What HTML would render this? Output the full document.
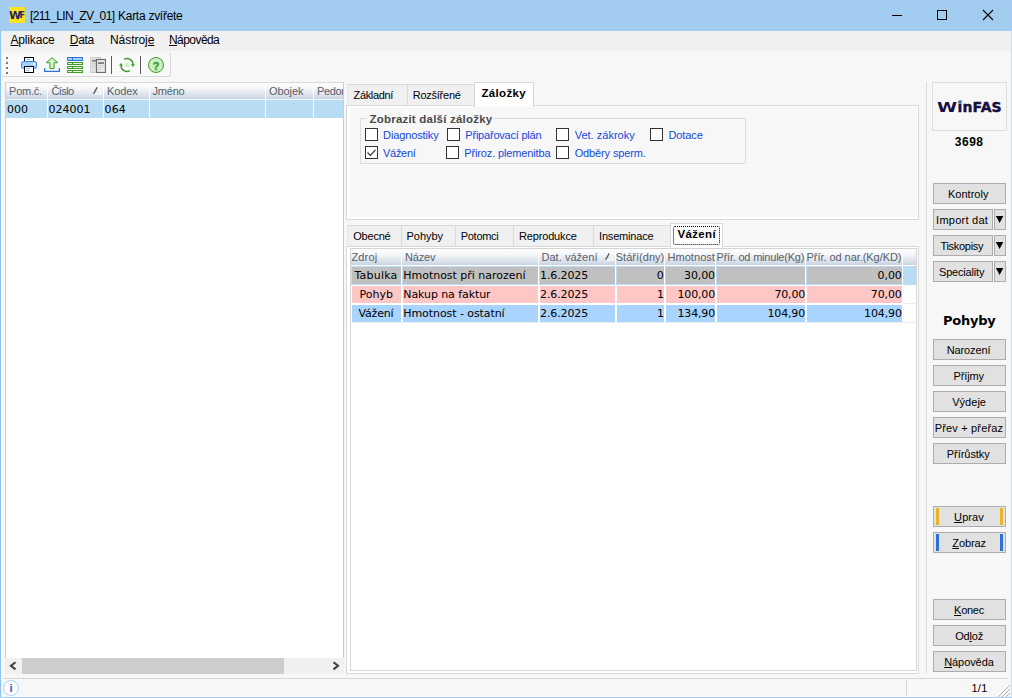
<!DOCTYPE html>
<html lang="cs">
<head>
<meta charset="utf-8">
<title>[211_LIN_ZV_01] Karta zvířete</title>
<style>
*{box-sizing:border-box;margin:0;padding:0}
html,body{width:1012px;height:698px;overflow:hidden;background:#f7f7f7}
body{position:relative;font-family:"Liberation Sans","DejaVu Sans",sans-serif;font-size:11px;color:#000}
.a,.t,.btn,.cb,.tab{position:absolute}
.t{white-space:nowrap;display:block;z-index:5}
u{text-decoration:underline;text-underline-offset:1px}
#title{left:0;top:0;width:1012px;height:31px;background:#a2cdf0}
#menu{left:1px;top:31px;width:1010px;height:20px;background:#f0f0f0}
.hdr{background:linear-gradient(#fdfdfe 0%,#f7f8fa 30%,#e8ecf1 55%,#d7dfe8 80%,#c9d3df 100%)}
.btn{background:#e1e1e1;border:1px solid #adadad;height:21px}
.cb{width:13px;height:13px;border:1px solid #333;background:#fff}
.tab{background:#f0f0f0;border:1px solid #d9d9d9;border-bottom:none}
.tab.sel{background:#f7f7f7;z-index:3}
.w{display:inline-block;font-weight:inherit;transform:scaleX(1.3);transform-origin:0 50%;margin-right:4.6px;-webkit-text-stroke:0}
.vs{position:absolute;width:1px;background:#fff}
</style>
</head>
<body>
<!-- window frame -->
<div class="a" id="title"></div>
<div class="a" style="left:0;top:31px;width:1px;height:667px;background:#8fc4ee"></div>
<div class="a" style="left:1011px;top:31px;width:1px;height:667px;background:#c2def5"></div>
<div class="a" style="left:0;top:697px;width:1012px;height:1px;background:#a3cdf0"></div>
<!-- app icon -->
<div class="a" style="left:9px;top:7px;width:16px;height:16px;background:#ffe21f"></div>
<!-- window buttons -->
<svg class="a" style="left:880px;top:0" width="132" height="31" viewBox="0 0 132 31">
  <path d="M12 15.5h10" stroke="#000" stroke-width="1" fill="none"/>
  <rect x="57.5" y="10.5" width="9" height="9" stroke="#000" stroke-width="1" fill="none"/>
  <path d="M103 10l10 10M113 10l-10 10" stroke="#000" stroke-width="1.1" fill="none"/>
</svg>
<div class="a" id="menu"></div>
<!-- toolbar -->
<div class="a" style="left:1px;top:52px;width:170px;height:25px;background:#f9f9f9;border:1px solid #d8d8d8;border-top-color:#efefef;border-left-color:#efefef;border-radius:3px"></div>
<!-- toolbar grip -->
<div class="a" style="left:6px;top:57px;width:2px;height:2px;background:#7a7a7a;box-shadow:0 5px 0 #7a7a7a,0 10px 0 #7a7a7a,0 15px 0 #7a7a7a"></div>
<!-- printer -->
<svg class="a" style="left:21px;top:57px" width="16" height="16" viewBox="0 0 16 16">
  <rect x="3.5" y="0.5" width="9" height="5" fill="#fff" stroke="#000"/>
  <path d="M5.2 2.5h3.8" stroke="#7cc0fb" stroke-width="1"/>
  <rect x="0.5" y="4.5" width="15" height="7" rx="2" fill="#a3d0fd" stroke="#3b82e0"/>
  <rect x="12.2" y="6" width="1.8" height="2" fill="#fff"/>
  <rect x="3.5" y="9.5" width="9" height="6" fill="#fff" stroke="#000"/>
  <path d="M5.2 11.5h3.8M5.2 13.5h2.8" stroke="#7cc0fb" stroke-width="1"/>
</svg>
<!-- upload -->
<svg class="a" style="left:44px;top:57px" width="16" height="16" viewBox="0 0 16 16">
  <path d="M8 0.6L13.7 5.7H10.1V11.6H5.9V5.7H2.3Z" fill="#d2f5c4" stroke="#45992e" stroke-width="1" stroke-linejoin="round"/>
  <path d="M0.6 11v3.4h14.8V11" fill="none" stroke="#2f74d8" stroke-width="1.3"/>
</svg>
<!-- table -->
<svg class="a" style="left:67px;top:57px" width="16" height="16" viewBox="0 0 16 16">
  <rect x="0" y="0" width="16" height="4" rx="0.5" fill="#2f74d8"/>
  <rect x="1" y="1" width="4" height="2" fill="#a3d0fd"/><rect x="6" y="1" width="9" height="2" fill="#a3d0fd"/>
  <rect x="0" y="5" width="16" height="3" rx="0.5" fill="#45992e"/>
  <rect x="0" y="9" width="16" height="3" rx="0.5" fill="#45992e"/>
  <rect x="0" y="13" width="16" height="3" rx="0.5" fill="#45992e"/>
  <path d="M1 6.5h4M6 6.5h9M1 10.5h4M6 10.5h9M1 14.5h4M6 14.5h9" stroke="#e4f8dc" stroke-width="1"/>
</svg>
<!-- copy (disabled) -->
<svg class="a" style="left:90px;top:57px" width="16" height="16" viewBox="0 0 16 16">
  <rect x="0.5" y="0.5" width="10" height="15" fill="#e2e2e2" stroke="#cfcfcf"/>
  <rect x="2" y="3" width="5" height="1.6" fill="#7a7a7a"/>
  <path d="M2 6.5h4M2 8.5h4M2 10.5h3" stroke="#cfcfcf" stroke-width="1"/>
  <rect x="6.5" y="2.5" width="9" height="13" fill="#e9e9e9" stroke="#6e6e6e" stroke-width="1.2"/>
  <rect x="8" y="5.2" width="6" height="1.7" fill="#757575"/>
  <path d="M8 8.5h6M8 10.5h5M8 12.5h3" stroke="#d0d0d0" stroke-width="1"/>
</svg>
<div class="a" style="left:111px;top:56px;width:1px;height:18px;background:#5a5a5a"></div>
<!-- refresh -->
<svg class="a" style="left:119px;top:57px" width="16" height="16" viewBox="0 0 16 16">
  <rect x="6.2" y="6.2" width="3.8" height="3.8" fill="#c8f0c0"/>
  <path d="M5.2 2.3A6 6 0 0 1 14 7.6" fill="none" stroke="#45992e" stroke-width="1.4"/>
  <path d="M11.8 7.2h4.2l-2.1 2.8z" fill="#45992e"/>
  <path d="M10.8 13.7A6 6 0 0 1 2 8.4" fill="none" stroke="#45992e" stroke-width="1.4"/>
  <path d="M4.2 8.8H0l2.1-2.8z" fill="#45992e"/>
</svg>
<div class="a" style="left:140px;top:56px;width:1px;height:18px;background:#5a5a5a"></div>
<!-- help -->
<div class="a" style="left:148px;top:57px;width:16px;height:16px;border-radius:8px;background:#c9f0c2;border:1px solid #45992e"></div>

<!-- left grid -->
<div class="a" style="left:5px;top:82px;width:339px;height:576px;background:#fff;border:1px solid #cdcdcd;border-top-color:#d9d9d9;border-bottom:none"></div>
<div class="a hdr" style="left:6px;top:83px;width:337px;height:16px"></div>
<div class="a" style="left:6px;top:99px;width:337px;height:1px;background:#f1f3f6"></div>
<div class="a" style="left:6px;top:100px;width:337px;height:18px;background:#b9dcf5"></div>
<div class="vs" style="left:47px;top:83px;height:35px"></div>
<div class="vs" style="left:103px;top:83px;height:35px"></div>
<div class="vs" style="left:149px;top:83px;height:35px"></div>
<div class="vs" style="left:265px;top:83px;height:35px"></div>
<div class="vs" style="left:313px;top:83px;height:35px"></div>
<svg class="a" style="left:93px;top:87px" width="9" height="8" viewBox="0 0 9 8"><path d="M4.2 0.6L8.2 6.9H0.6" stroke="#fff" stroke-width="1.4" fill="none"/><path d="M0.6 6.9L4.2 0.4" stroke="#555" stroke-width="1.3" fill="none"/></svg>

<!-- left scrollbar -->
<div class="a" style="left:5px;top:658px;width:339px;height:16px;background:#f0f0f0"></div>
<div class="a" style="left:22px;top:658px;width:262px;height:16px;background:#cdcdcd"></div>
<svg class="a" style="left:5px;top:658px" width="339" height="16" viewBox="0 0 339 16">
  <path d="M10.5 4.2L6 7.8l4.5 3.6" stroke="#404040" stroke-width="2.1" fill="none"/>
  <path d="M328.5 4.2L333 7.8l-4.5 3.6" stroke="#404040" stroke-width="2.1" fill="none"/>
</svg>
<!-- upper tab control -->
<div class="a" style="left:346px;top:105px;width:573px;height:115px;background:#fff;border:1px solid #d9d9d9"></div>
<div class="a" style="left:350px;top:107px;width:567px;height:110px;background:#f7f7f7"></div>
<div class="tab" style="left:347px;top:84px;width:61px;height:21px;border-left-color:#e6e6e6"></div>
<div class="tab" style="left:407px;top:84px;width:68px;height:21px"></div>
<div class="tab sel" style="left:474px;top:82px;width:60px;height:25px;background:#fff"></div>
<!-- group box -->
<div class="a" style="left:360px;top:118px;width:386px;height:46px;border:1px solid #dcdcdc"></div>
<div class="a" style="left:367px;top:116px;width:127px;height:5px;background:#f7f7f7"></div>
<div class="cb" style="left:365px;top:128px"></div>
<div class="cb" style="left:447px;top:128px"></div>
<div class="cb" style="left:556px;top:128px"></div>
<div class="cb" style="left:650px;top:128px"></div>
<div class="cb" style="left:365px;top:146px"></div>
<div class="cb" style="left:446px;top:146px"></div>
<div class="cb" style="left:556px;top:146px"></div>
<svg class="a" style="left:365px;top:146px;z-index:4" width="13" height="13" viewBox="0 0 13 13"><path d="M2.5 6.5l2.8 2.8L10.5 3.8" stroke="#333" stroke-width="1.2" fill="none"/></svg>
<!-- lower tab control -->
<div class="a" style="left:346px;top:246px;width:573px;height:428px;background:#fff;border:1px solid #d9d9d9"></div>
<div class="tab" style="left:347px;top:225px;width:55px;height:21px;border-left-color:#e6e6e6"></div>
<div class="tab" style="left:401px;top:225px;width:55px;height:21px"></div>
<div class="tab" style="left:455px;top:225px;width:59px;height:21px"></div>
<div class="tab" style="left:513px;top:225px;width:81px;height:21px"></div>
<div class="tab" style="left:593px;top:225px;width:79px;height:21px"></div>
<div class="tab sel" style="left:670px;top:223px;width:53px;height:25px;background:#fff"></div>
<div class="a" style="left:673px;top:226px;width:47px;height:19px;border:1px dotted #000;border-radius:2px;z-index:4"></div>
<!-- inner grid -->
<div class="a" style="left:350px;top:248px;width:567px;height:423px;background:#fff;border:1px solid #d4d4d4"></div>
<div class="a hdr" style="left:351px;top:249px;width:565px;height:16px"></div>
<div class="a" style="left:351px;top:266px;width:565px;height:19px;background:#b9dcf5"></div>
<div class="a" style="left:352px;top:267px;width:49px;height:17px;background:#c0c0c0"></div>
<div class="a" style="left:403px;top:267px;width:135px;height:17px;background:#c0c0c0"></div>
<div class="a" style="left:540px;top:267px;width:75px;height:17px;background:#c0c0c0"></div>
<div class="a" style="left:617px;top:267px;width:47px;height:17px;background:#c0c0c0"></div>
<div class="a" style="left:666px;top:267px;width:49px;height:17px;background:#c0c0c0"></div>
<div class="a" style="left:717px;top:267px;width:88px;height:17px;background:#c0c0c0"></div>
<div class="a" style="left:807px;top:267px;width:95px;height:17px;background:#c0c0c0"></div>
<div class="a" style="left:352px;top:286px;width:49px;height:17px;background:#ffc6c6"></div>
<div class="a" style="left:403px;top:286px;width:135px;height:17px;background:#ffc6c6"></div>
<div class="a" style="left:540px;top:286px;width:75px;height:17px;background:#ffc6c6"></div>
<div class="a" style="left:617px;top:286px;width:47px;height:17px;background:#ffc6c6"></div>
<div class="a" style="left:666px;top:286px;width:49px;height:17px;background:#ffc6c6"></div>
<div class="a" style="left:717px;top:286px;width:88px;height:17px;background:#ffc6c6"></div>
<div class="a" style="left:807px;top:286px;width:95px;height:17px;background:#ffc6c6"></div>
<div class="a" style="left:352px;top:305px;width:49px;height:17px;background:#a9d4ff"></div>
<div class="a" style="left:403px;top:305px;width:135px;height:17px;background:#a9d4ff"></div>
<div class="a" style="left:540px;top:305px;width:75px;height:17px;background:#a9d4ff"></div>
<div class="a" style="left:617px;top:305px;width:47px;height:17px;background:#a9d4ff"></div>
<div class="a" style="left:666px;top:305px;width:49px;height:17px;background:#a9d4ff"></div>
<div class="a" style="left:717px;top:305px;width:88px;height:17px;background:#a9d4ff"></div>
<div class="a" style="left:807px;top:305px;width:95px;height:17px;background:#a9d4ff"></div>
<div class="vs" style="left:401px;top:249px;height:74px"></div>
<div class="vs" style="left:538px;top:249px;height:74px"></div>
<div class="vs" style="left:615px;top:249px;height:74px"></div>
<div class="vs" style="left:664px;top:249px;height:74px"></div>
<div class="vs" style="left:715px;top:249px;height:74px"></div>
<div class="vs" style="left:805px;top:249px;height:74px"></div>
<div class="vs" style="left:902px;top:249px;height:74px"></div>
<div class="a" style="left:903px;top:303px;width:13px;height:1px;background:#ececec"></div>
<div class="a" style="left:351px;top:322px;width:565px;height:1px;background:#ececec"></div>
<svg class="a" style="left:605px;top:252.5px" width="9" height="8" viewBox="0 0 9 8"><path d="M4.2 0.6L8.2 6.9H0.6" stroke="#fff" stroke-width="1.4" fill="none"/><path d="M0.6 6.9L4.2 0.4" stroke="#555" stroke-width="1.3" fill="none"/></svg>

<div class="a" style="left:926px;top:82px;width:1px;height:591px;background:#dcdcdc"></div>
<div class="a" style="left:932px;top:82px;width:75px;height:49px;border:1px solid #dddddd;background:#f7f7f7"></div>
<div class="a" style="left:959px;top:100px;width:3px;height:3px;border-radius:2px;background:#3a9ad9;z-index:6"></div>
<div class="btn" style="left:933px;top:183px;width:73px"></div>
<div class="btn" style="left:933px;top:209px;width:60px"></div><div class="btn" style="left:994px;top:209px;width:12px"></div>
<div class="btn" style="left:933px;top:235px;width:60px"></div><div class="btn" style="left:994px;top:235px;width:12px"></div>
<div class="btn" style="left:933px;top:261px;width:60px"></div><div class="btn" style="left:994px;top:261px;width:12px"></div>
<svg class="a" style="left:994px;top:209px;z-index:4" width="12" height="73" viewBox="0 0 12 73"><path d="M1.9 7h7.4l-3.7 7zM1.9 33h7.4l-3.7 7zM1.9 59h7.4l-3.7 7z" fill="#000"/></svg>
<div class="btn" style="left:933px;top:339px;width:73px"></div>
<div class="btn" style="left:933px;top:365px;width:73px"></div>
<div class="btn" style="left:933px;top:391px;width:73px"></div>
<div class="btn" style="left:933px;top:417px;width:73px"></div>
<div class="btn" style="left:933px;top:443px;width:73px"></div>
<div class="btn" style="left:933px;top:506px;width:73px"></div>
<div class="a" style="left:936px;top:508px;width:3px;height:17px;background:#e9b526"></div>
<div class="a" style="left:1000px;top:508px;width:3px;height:17px;background:#e9b526"></div>
<div class="btn" style="left:933px;top:532px;width:73px"></div>
<div class="a" style="left:936px;top:534px;width:3px;height:17px;background:#2f6fd8"></div>
<div class="a" style="left:1000px;top:534px;width:3px;height:17px;background:#2f6fd8"></div>
<div class="btn" style="left:933px;top:599px;width:73px"></div>
<div class="btn" style="left:933px;top:625px;width:73px"></div>
<div class="btn" style="left:933px;top:651px;width:73px"></div>

<!-- status bar -->
<div class="a" style="left:3px;top:678px;width:1005px;height:1px;background:#d7d7d7"></div>
<div class="a" style="left:906px;top:680px;width:1px;height:16px;background:#d7d7d7"></div>
<div class="a" style="left:3px;top:680px;width:16px;height:16px;border-radius:8px;background:#fff;border:1px solid #a9d3fb"></div>
<svg class="a" style="left:997px;top:684px" width="13" height="13" viewBox="0 0 13 13">
  <path d="M13 1L1 13M13 5L5 13M13 9L9 13" stroke="#b0b0b0" stroke-width="1" fill="none"/>
</svg>
<span class="t" style="left:30.0px;top:8px;font:12px/16px 'Liberation Sans','DejaVu Sans',sans-serif;color:#000;letter-spacing:-0.58px">[211_LIN_ZV_01]</span>
<span class="t" style="left:118.0px;top:8px;font:12px/16px 'Liberation Sans','DejaVu Sans',sans-serif;color:#000;letter-spacing:-0.27px">Karta zvířete</span>
<span class="t" style="left:10.5px;top:32px;font:12px/16px 'Liberation Sans','DejaVu Sans',sans-serif;color:#000;letter-spacing:-0.17px"><u>A</u>plikace</span>
<span class="t" style="left:69.8px;top:32px;font:12px/16px 'Liberation Sans','DejaVu Sans',sans-serif;color:#000;letter-spacing:-0.29px"><u>D</u>ata</span>
<span class="t" style="left:110.0px;top:32px;font:12px/16px 'Liberation Sans','DejaVu Sans',sans-serif;color:#000;letter-spacing:-0.05px">Nástro<u>je</u></span>
<span class="t" style="left:169.0px;top:32px;font:12px/16px 'Liberation Sans','DejaVu Sans',sans-serif;color:#000;letter-spacing:-0.56px"><u>N</u>ápověda</span>
<span class="t" style="left:9.1px;top:83px;font:11px/16px 'Liberation Sans','DejaVu Sans',sans-serif;color:#57606b;letter-spacing:-0.26px">Pom.č.</span>
<span class="t" style="left:51.5px;top:83px;font:11px/16px 'Liberation Sans','DejaVu Sans',sans-serif;color:#57606b;letter-spacing:-0.61px">Číslo</span>
<span class="t" style="left:107.0px;top:83px;font:11px/16px 'Liberation Sans','DejaVu Sans',sans-serif;color:#57606b;letter-spacing:-0.14px">Kodex</span>
<span class="t" style="left:152.5px;top:83px;font:11px/16px 'Liberation Sans','DejaVu Sans',sans-serif;color:#57606b;letter-spacing:-0.21px">Jméno</span>
<span class="t" style="left:269.0px;top:83px;font:11px/16px 'Liberation Sans','DejaVu Sans',sans-serif;color:#57606b;letter-spacing:-0.06px">Obojek</span>
<span class="t" style="left:317.0px;top:83px;font:11px/16px 'Liberation Sans','DejaVu Sans',sans-serif;color:#57606b;letter-spacing:-0.34px;width:26px;overflow:hidden">Pedometr</span>
<span class="t" style="left:7.0px;top:102px;font:11px/16px 'DejaVu Sans','Liberation Sans',sans-serif;color:#000;letter-spacing:0.0px">000</span>
<span class="t" style="left:48.5px;top:102px;font:11px/16px 'DejaVu Sans','Liberation Sans',sans-serif;color:#000;letter-spacing:0.0px">024001</span>
<span class="t" style="left:104.5px;top:102px;font:11px/16px 'DejaVu Sans','Liberation Sans',sans-serif;color:#000;letter-spacing:0.17px">064</span>
<span class="t" style="left:353.5px;top:87px;font:11px/16px 'Liberation Sans','DejaVu Sans',sans-serif;color:#000;letter-spacing:-0.33px">Základní</span>
<span class="t" style="left:412.7px;top:87px;font:11px/16px 'Liberation Sans','DejaVu Sans',sans-serif;color:#000;letter-spacing:-0.24px">Rozšířené</span>
<span class="t" style="left:481.5px;top:85px;font:bold 11.5px/16px 'Liberation Sans','DejaVu Sans',sans-serif;color:#000;letter-spacing:0.33px">Záložky</span>
<span class="t" style="left:369.5px;top:111px;font:bold 11.5px/16px 'Liberation Sans','DejaVu Sans',sans-serif;color:#4a4a4a;letter-spacing:0.21px">Zobrazit další záložky</span>
<span class="t" style="left:383.1px;top:127px;font:11px/16px 'Liberation Sans','DejaVu Sans',sans-serif;color:#1448de;letter-spacing:-0.13px">Diagnostiky</span>
<span class="t" style="left:465.3px;top:127px;font:11px/16px 'Liberation Sans','DejaVu Sans',sans-serif;color:#1448de;letter-spacing:-0.21px">Připařovací plán</span>
<span class="t" style="left:574.7px;top:127px;font:11px/16px 'Liberation Sans','DejaVu Sans',sans-serif;color:#1448de;letter-spacing:0.01px">Vet. zákroky</span>
<span class="t" style="left:668.4px;top:127px;font:11px/16px 'Liberation Sans','DejaVu Sans',sans-serif;color:#1448de;letter-spacing:-0.09px">Dotace</span>
<span class="t" style="left:383.1px;top:145px;font:11px/16px 'Liberation Sans','DejaVu Sans',sans-serif;color:#1448de;letter-spacing:-0.31px">Vážení</span>
<span class="t" style="left:464.3px;top:145px;font:11px/16px 'Liberation Sans','DejaVu Sans',sans-serif;color:#1448de;letter-spacing:-0.14px">Přiroz. plemenitba</span>
<span class="t" style="left:574.7px;top:145px;font:11px/16px 'Liberation Sans','DejaVu Sans',sans-serif;color:#1448de;letter-spacing:-0.13px">Odběry sperm.</span>
<span class="t" style="left:353.25px;top:228px;font:11px/16px 'Liberation Sans','DejaVu Sans',sans-serif;color:#000;letter-spacing:-0.21px">Obecné</span>
<span class="t" style="left:406.5px;top:228px;font:11px/16px 'Liberation Sans','DejaVu Sans',sans-serif;color:#000;letter-spacing:-0.03px">Pohyby</span>
<span class="t" style="left:460.75px;top:228px;font:11px/16px 'Liberation Sans','DejaVu Sans',sans-serif;color:#000;letter-spacing:-0.29px">Potomci</span>
<span class="t" style="left:519.0px;top:228px;font:11px/16px 'Liberation Sans','DejaVu Sans',sans-serif;color:#000;letter-spacing:-0.16px">Reprodukce</span>
<span class="t" style="left:599.0px;top:228px;font:11px/16px 'Liberation Sans','DejaVu Sans',sans-serif;color:#000;letter-spacing:-0.18px">Inseminace</span>
<span class="t" style="left:677.5px;top:226px;font:bold 11.5px/16px 'Liberation Sans','DejaVu Sans',sans-serif;color:#000;letter-spacing:0.34px">Vážení</span>
<span class="t" style="left:351.5px;top:249px;font:11px/16px 'Liberation Sans','DejaVu Sans',sans-serif;color:#57606b;letter-spacing:0.14px">Zdroj</span>
<span class="t" style="left:405.0px;top:249px;font:11px/16px 'Liberation Sans','DejaVu Sans',sans-serif;color:#57606b;letter-spacing:-0.2px">Název</span>
<span class="t" style="left:541.5px;top:249px;font:11px/16px 'Liberation Sans','DejaVu Sans',sans-serif;color:#57606b;letter-spacing:0.03px">Dat. vážení</span>
<span class="t" style="left:615.75px;top:249px;font:11px/16px 'Liberation Sans','DejaVu Sans',sans-serif;color:#57606b;letter-spacing:0.02px">Stáří(dny)</span>
<span class="t" style="left:667.5px;top:249px;font:11px/16px 'Liberation Sans','DejaVu Sans',sans-serif;color:#57606b;letter-spacing:0.05px">Hmotnost</span>
<span class="t" style="left:716.5px;top:249px;font:11px/16px 'Liberation Sans','DejaVu Sans',sans-serif;color:#57606b;letter-spacing:-0.21px">Přír. od minule(Kg)</span>
<span class="t" style="left:806.5px;top:249px;font:11px/16px 'Liberation Sans','DejaVu Sans',sans-serif;color:#57606b;letter-spacing:-0.05px">Přír. od nar.(Kg/KD)</span>
<span class="t" style="left:354.5px;top:268px;font:11px/16px 'DejaVu Sans','Liberation Sans',sans-serif;color:#000;letter-spacing:0.2px">Tabulka</span>
<span class="t" style="left:403.25px;top:268px;font:11px/16px 'DejaVu Sans','Liberation Sans',sans-serif;color:#000;letter-spacing:-0.02px">Hmotnost při narození</span>
<span class="t" style="left:540.0px;top:268px;font:11px/16px 'DejaVu Sans','Liberation Sans',sans-serif;color:#000;letter-spacing:-0.12px">1.6.2025</span>
<span class="t" style="left:656.8px;top:268px;font:11px/16px 'DejaVu Sans','Liberation Sans',sans-serif;color:#000;letter-spacing:1.0px">0</span>
<span class="t" style="left:684.0px;top:268px;font:11px/16px 'DejaVu Sans','Liberation Sans',sans-serif;color:#000;letter-spacing:-0.1px">30,00</span>
<span class="t" style="left:877.5px;top:268px;font:11px/16px 'DejaVu Sans','Liberation Sans',sans-serif;color:#000;letter-spacing:-0.06px">0,00</span>
<span class="t" style="left:359.5px;top:287px;font:11px/16px 'DejaVu Sans','Liberation Sans',sans-serif;color:#000;letter-spacing:0.01px">Pohyb</span>
<span class="t" style="left:403.25px;top:287px;font:11px/16px 'DejaVu Sans','Liberation Sans',sans-serif;color:#000;letter-spacing:-0.08px">Nakup na faktur</span>
<span class="t" style="left:540.0px;top:287px;font:11px/16px 'DejaVu Sans','Liberation Sans',sans-serif;color:#000;letter-spacing:-0.12px">2.6.2025</span>
<span class="t" style="left:657.0px;top:287px;font:11px/16px 'DejaVu Sans','Liberation Sans',sans-serif;color:#000;letter-spacing:0.25px">1</span>
<span class="t" style="left:677.5px;top:287px;font:11px/16px 'DejaVu Sans','Liberation Sans',sans-serif;color:#000;letter-spacing:-0.17px">100,00</span>
<span class="t" style="left:774.5px;top:287px;font:11px/16px 'DejaVu Sans','Liberation Sans',sans-serif;color:#000;letter-spacing:-0.2px">70,00</span>
<span class="t" style="left:870.75px;top:287px;font:11px/16px 'DejaVu Sans','Liberation Sans',sans-serif;color:#000;letter-spacing:-0.1px">70,00</span>
<span class="t" style="left:358.5px;top:306px;font:11px/16px 'DejaVu Sans','Liberation Sans',sans-serif;color:#000;letter-spacing:-0.16px">Vážení</span>
<span class="t" style="left:403.25px;top:306px;font:11px/16px 'DejaVu Sans','Liberation Sans',sans-serif;color:#000;letter-spacing:-0.07px">Hmotnost - ostatní</span>
<span class="t" style="left:540.0px;top:306px;font:11px/16px 'DejaVu Sans','Liberation Sans',sans-serif;color:#000;letter-spacing:-0.12px">2.6.2025</span>
<span class="t" style="left:657.0px;top:306px;font:11px/16px 'DejaVu Sans','Liberation Sans',sans-serif;color:#000;letter-spacing:0.25px">1</span>
<span class="t" style="left:677.5px;top:306px;font:11px/16px 'DejaVu Sans','Liberation Sans',sans-serif;color:#000;letter-spacing:-0.17px">134,90</span>
<span class="t" style="left:767.5px;top:306px;font:11px/16px 'DejaVu Sans','Liberation Sans',sans-serif;color:#000;letter-spacing:-0.17px">104,90</span>
<span class="t" style="left:864.0px;top:306px;font:11px/16px 'DejaVu Sans','Liberation Sans',sans-serif;color:#000;letter-spacing:-0.12px">104,90</span>
<span class="t" style="left:937.3px;top:99px;font:bold 14px/16px 'DejaVu Sans','Liberation Sans',sans-serif;color:#15103f;letter-spacing:0.14px;-webkit-text-stroke:0.4px #15103f"><b class="w">W</b>inFAS</span>
<span class="t" style="left:954.7px;top:134px;font:bold 12px/16px 'Liberation Sans','DejaVu Sans',sans-serif;color:#000;letter-spacing:0.55px">3698</span>
<span class="t" style="left:947.9px;top:186px;font:11px/16px 'Liberation Sans','DejaVu Sans',sans-serif;color:#000;letter-spacing:0.03px">Kontroly</span>
<span class="t" style="left:936.1px;top:212px;font:11px/16px 'Liberation Sans','DejaVu Sans',sans-serif;color:#000;letter-spacing:0.25px">Import dat</span>
<span class="t" style="left:940.4px;top:238px;font:11px/16px 'Liberation Sans','DejaVu Sans',sans-serif;color:#000;letter-spacing:-0.28px">Tiskopisy</span>
<span class="t" style="left:939.0px;top:264px;font:11px/16px 'Liberation Sans','DejaVu Sans',sans-serif;color:#000;letter-spacing:-0.18px">Speciality</span>
<span class="t" style="left:942.9px;top:313px;font:bold 13px/16px 'DejaVu Sans','Liberation Sans',sans-serif;color:#000;letter-spacing:-0.23px">Pohyby</span>
<span class="t" style="left:946.8px;top:342px;font:11px/16px 'Liberation Sans','DejaVu Sans',sans-serif;color:#000;letter-spacing:-0.14px">Narození</span>
<span class="t" style="left:953.5px;top:368px;font:11px/16px 'Liberation Sans','DejaVu Sans',sans-serif;color:#000;letter-spacing:-0.13px">Příjmy</span>
<span class="t" style="left:952.2px;top:394px;font:11px/16px 'Liberation Sans','DejaVu Sans',sans-serif;color:#000;letter-spacing:0.03px">Výdeje</span>
<span class="t" style="left:934.7px;top:420px;font:11px/16px 'Liberation Sans','DejaVu Sans',sans-serif;color:#000;letter-spacing:0.17px">Přev + přeřaz</span>
<span class="t" style="left:946.8px;top:446px;font:11px/16px 'Liberation Sans','DejaVu Sans',sans-serif;color:#000;letter-spacing:-0.05px">Přírůstky</span>
<span class="t" style="left:954.1px;top:509px;font:11px/16px 'Liberation Sans','DejaVu Sans',sans-serif;color:#000;letter-spacing:0.09px"><u>U</u>prav</span>
<span class="t" style="left:952.3px;top:535px;font:11px/16px 'Liberation Sans','DejaVu Sans',sans-serif;color:#000;letter-spacing:-0.09px"><u>Z</u>obraz</span>
<span class="t" style="left:954.1px;top:602px;font:11px/16px 'Liberation Sans','DejaVu Sans',sans-serif;color:#000;letter-spacing:-0.28px"><u>K</u>onec</span>
<span class="t" style="left:955.25px;top:628px;font:11px/16px 'Liberation Sans','DejaVu Sans',sans-serif;color:#000;letter-spacing:-0.2px">Od<u>l</u>ož</span>
<span class="t" style="left:944.2px;top:654px;font:11px/16px 'Liberation Sans','DejaVu Sans',sans-serif;color:#000;letter-spacing:-0.08px"><u>N</u>ápověda</span>
<span class="t" style="left:971.5px;top:680px;font:11px/16px 'Liberation Sans','DejaVu Sans',sans-serif;color:#000;letter-spacing:0.23px">1/1</span>
<span class="t" style="left:152.7px;top:57.5px;font:bold 11px/16px 'Liberation Sans','DejaVu Sans',sans-serif;color:#3f9428;letter-spacing:0.27px;-webkit-text-stroke:0.3px #3f9428">?</span>
<span class="t" style="left:9.2px;top:8px;font:bold 11px/16px 'DejaVu Sans','Liberation Sans',sans-serif;color:#2a2060;letter-spacing:0.001px;transform-origin:0 50%;transform:scaleX(0.997)">W</span>
<span class="t" style="left:19.5px;top:8px;font:bold 8px/16px 'DejaVu Sans','Liberation Sans',sans-serif;color:#2a2060;letter-spacing:-0.27px">F</span>
<span class="t" style="left:9.4px;top:680px;font:bold 11px/16px 'Liberation Sans','DejaVu Sans',sans-serif;color:#1c5fd0;letter-spacing:0.24px">i</span>
</body>
</html>
